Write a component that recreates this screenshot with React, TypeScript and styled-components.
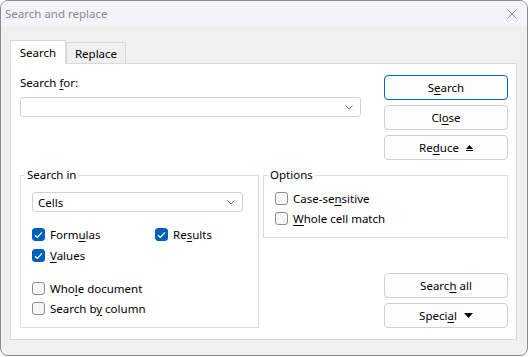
import React from "react";
import styled, { createGlobalStyle } from "styled-components";

const Global = createGlobalStyle`
  html, body { margin: 0; padding: 0; background: #ffffff; }
  body {
    font-family: "Segoe UI", "Noto Sans", "DejaVu Sans", sans-serif;
    font-size: 11.5px;
    color: #000;
  }
  * { box-sizing: border-box; }
`;

const Window = styled.div`
  width: 528px;
  height: 356px;
  border: 1px solid #8c8c8c;
  border-radius: 8px;
  overflow: hidden;
  background: #f0f0f0;
  display: flex;
  flex-direction: column;
`;

const TitleBar = styled.div`
  height: 25px;
  flex: none;
  background: #f3f3f9;
  display: flex;
  align-items: center;
  justify-content: space-between;
  padding: 0 10px 0 4px;
  color: #8a8a8a;
  font-size: 11.5px;
`;

const Body = styled.div`
  flex: 1;
  display: flex;
  flex-direction: column;
  padding: 14px 10px 15px 9px;
`;

const TabStrip = styled.div`
  display: flex;
  align-items: flex-end;
  height: 23px;
`;

const Tab = styled.div<{ $active?: boolean; $w: number }>`
  position: relative;
  width: ${(p) => p.$w}px;
  height: ${(p) => (p.$active ? 24 : 21)}px;
  margin-bottom: ${(p) => (p.$active ? -1 : 0)}px;
  background: ${(p) => (p.$active ? "#ffffff" : "#f0f0f0")};
  border: 1px solid #d9d9d9;
  border-bottom: none;
  z-index: ${(p) => (p.$active ? 1 : 0)};
  display: flex;
  align-items: center;
  justify-content: center;
`;

const Panel = styled.div`
  background: #ffffff;
  border: 1px solid #d9d9d9;
  padding: 11px 8px 11px 9px;
  display: flex;
  flex-direction: column;
`;

const TopRow = styled.div`
  display: flex;
  justify-content: space-between;
`;

const SearchFor = styled.div`
  width: 341px;
  display: flex;
  flex-direction: column;
  gap: 6px;
`;

const Label = styled.div`
  line-height: 16px;
  height: 16px;
`;

const Combo = styled.div<{ $w?: number }>`
  height: 20px;
  width: ${(p) => (p.$w ? `${p.$w}px` : "100%")};
  border: 1px solid #d1d1d1;
  border-radius: 3px;
  background: #fff;
  display: flex;
  align-items: center;
  justify-content: space-between;
  padding: 0 7px 0 5px;
`;

const ButtonColumn = styled.div`
  width: 124px;
  display: flex;
  flex-direction: column;
  gap: 5px;
`;

const Button = styled.button<{ $primary?: boolean }>`
  height: 25px;
  width: 124px;
  border: 1px solid ${(p) => (p.$primary ? "#0067c0" : "#d0d0d0")};
  border-radius: 4px;
  background: #fdfdfd;
  font: inherit;
  color: #000;
  display: flex;
  align-items: center;
  justify-content: center;
  gap: 7px;
  padding: 0;
`;

const BottomRow = styled.div`
  display: flex;
  gap: 4px;
  margin-top: 7px;
  height: 161px;
`;

const Group = styled.fieldset<{ $w: number; $h: number; $pr?: number }>`
  margin: 0;
  min-width: 0;
  width: ${(p) => p.$w}px;
  height: ${(p) => p.$h}px;
  border: 1px solid #dcdcdc;
  padding: 9px ${(p) => p.$pr ?? 11}px 0 11px;
  display: flex;
  flex-direction: column;
`;

const Legend = styled.legend`
  padding: 0 2px;
  margin-left: -7px;
  line-height: 16px;
`;

const CheckGrid = styled.div`
  display: grid;
  grid-template-columns: 123px auto;
  row-gap: 8px;
  margin-top: 16px;
`;

const CheckList = styled.div<{ $gap: number; $mt?: number }>`
  display: flex;
  flex-direction: column;
  gap: ${(p) => p.$gap}px;
  margin-top: ${(p) => p.$mt ?? 0}px;
`;

const CheckItem = styled.label`
  display: flex;
  align-items: center;
  gap: 5px;
  height: 13px;
  line-height: 16px;
  white-space: nowrap;
`;

const Box = styled.span<{ $checked?: boolean }>`
  width: 13px;
  height: 13px;
  flex: none;
  border-radius: 3px;
  border: 1px solid ${(p) => (p.$checked ? "#005fb8" : "#8d8d8d")};
  background: ${(p) => (p.$checked ? "#005fb8" : "#f7f7f7")};
  display: flex;
  align-items: center;
  justify-content: center;
`;

const RightColumn = styled.div`
  width: 245px;
  display: flex;
  flex-direction: column;
`;

const BottomButtons = styled.div`
  margin-top: auto;
  align-self: flex-end;
  display: flex;
  flex-direction: column;
  gap: 5px;
`;

const Key = styled.span`
  text-decoration: underline;
  text-underline-offset: 2px;
  text-decoration-thickness: 1px;
`;

const Chevron = () => (
  <svg width="8" height="5" viewBox="0 0 8 5">
    <polyline points="0.5,0.5 4,4 7.5,0.5" fill="none" stroke="#6b6b6b" strokeWidth="1" />
  </svg>
);

const Check = ({ checked, children }: { checked?: boolean; children: React.ReactNode }) => (
  <CheckItem>
    <Box $checked={checked}>
      {checked && (
        <svg width="9" height="8" viewBox="0 0 9 8">
          <polyline points="1,4.2 3.3,6.4 8,1.4" fill="none" stroke="#fff" strokeWidth="1.2" />
        </svg>
      )}
    </Box>
    <span>{children}</span>
  </CheckItem>
);

export default function App() {
  return (
    <>
      <Global />
      <Window>
        <TitleBar>
          <span>Search and replace</span>
          <svg width="10" height="10" viewBox="0 0 10 10">
            <path d="M0.5 0.5 L9.5 9.5 M9.5 0.5 L0.5 9.5" stroke="#8a8a8a" strokeWidth="1" />
          </svg>
        </TitleBar>
        <Body>
          <TabStrip>
            <Tab $active $w={56}>Search</Tab>
            <Tab $w={60}>Replace</Tab>
          </TabStrip>
          <Panel>
            <TopRow>
              <SearchFor>
                <Label>
                  Search <Key>f</Key>or:
                </Label>
                <Combo>
                  <span />
                  <Chevron />
                </Combo>
              </SearchFor>
              <ButtonColumn>
                <Button $primary>
                  <span>
                    S<Key>e</Key>arch
                  </span>
                </Button>
                <Button>
                  <span>
                    Cl<Key>o</Key>se
                  </span>
                </Button>
                <Button>
                  <span>
                    Re<Key>d</Key>uce
                  </span>
                  <svg width="7" height="6" viewBox="0 0 7 6">
                    <polygon points="0,4 3.5,0 7,4" fill="#000" />
                    <rect x="0" y="5" width="7" height="1" fill="#000" />
                  </svg>
                </Button>
              </ButtonColumn>
            </TopRow>
            <BottomRow>
              <Group $w={239} $h={161} $pr={15}>
                <Legend>Search in</Legend>
                <Combo $w={211}>
                  <span>Cells</span>
                  <Chevron />
                </Combo>
                <CheckGrid>
                  <Check checked>
                    Form<Key>u</Key>las
                  </Check>
                  <Check checked>
                    Re<Key>s</Key>ults
                  </Check>
                  <Check checked>
                    <Key>V</Key>alues
                  </Check>
                </CheckGrid>
                <CheckList $gap={7} $mt={20}>
                  <Check>
                    Who<Key>l</Key>e document
                  </Check>
                  <Check>
                    Search b<Key>y</Key> column
                  </Check>
                </CheckList>
              </Group>
              <RightColumn>
                <Group $w={245} $h={71}>
                  <Legend>Options</Legend>
                  <CheckList $gap={7}>
                    <Check>
                      Case-se<Key>n</Key>sitive
                    </Check>
                    <Check>
                      <Key>W</Key>hole cell match
                    </Check>
                  </CheckList>
                </Group>
                <BottomButtons>
                  <Button>
                    <span>
                      Searc<Key>h</Key> all
                    </span>
                  </Button>
                  <Button>
                    <span>
                      Speci<Key>a</Key>l
                    </span>
                    <svg width="9" height="5" viewBox="0 0 9 5">
                      <polygon points="0,0 9,0 4.5,5" fill="#000" />
                    </svg>
                  </Button>
                </BottomButtons>
              </RightColumn>
            </BottomRow>
          </Panel>
        </Body>
      </Window>
    </>
  );
}
